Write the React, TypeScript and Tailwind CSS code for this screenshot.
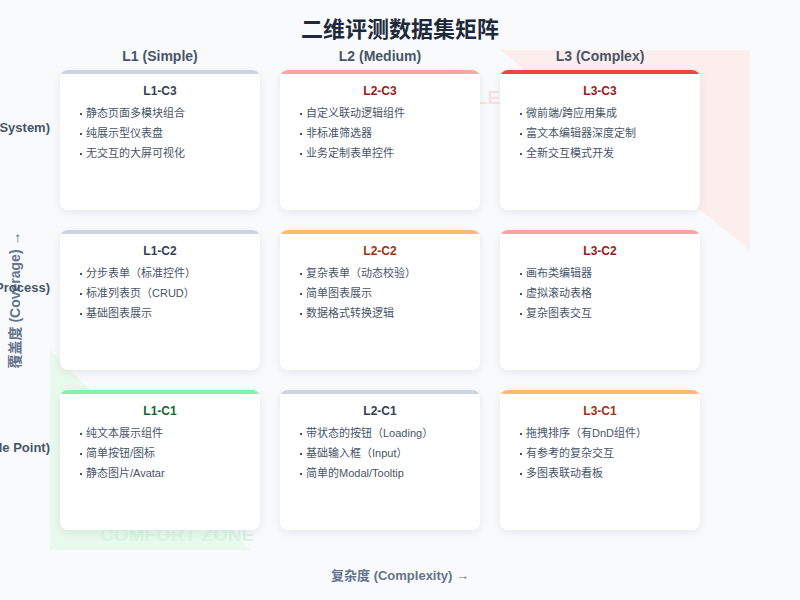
import React from 'react';

type Cell = { id: string; bar: string; title: string; items: string[] };

const rows: { label: string; cells: Cell[] }[] = [
  {
    label: 'C3 (Design System)',
    cells: [
      { id: 'L1-C3', bar: 'bg-[#cbd5e1]', title: 'text-[#334155]', items: ['静态页面多模块组合', '纯展示型仪表盘', '无交互的大屏可视化'] },
      { id: 'L2-C3', bar: 'bg-[#fca5a5]', title: 'text-[#991b1b]', items: ['自定义联动逻辑组件', '非标准筛选器', '业务定制表单控件'] },
      { id: 'L3-C3', bar: 'bg-[#ef4444]', title: 'text-[#991b1b]', items: ['微前端/跨应用集成', '富文本编辑器深度定制', '全新交互模式开发'] },
    ],
  },
  {
    label: 'C2 (Business Process)',
    cells: [
      { id: 'L1-C2', bar: 'bg-[#cbd5e1]', title: 'text-[#334155]', items: ['分步表单（标准控件）', '标准列表页（CRUD）', '基础图表展示'] },
      { id: 'L2-C2', bar: 'bg-[#fdba74]', title: 'text-[#9a3412]', items: ['复杂表单（动态校验）', '简单图表展示', '数据格式转换逻辑'] },
      { id: 'L3-C2', bar: 'bg-[#fca5a5]', title: 'text-[#991b1b]', items: ['画布类编辑器', '虚拟滚动表格', '复杂图表交互'] },
    ],
  },
  {
    label: 'C1 (Single Point)',
    cells: [
      { id: 'L1-C1', bar: 'bg-[#86efac]', title: 'text-[#166534]', items: ['纯文本展示组件', '简单按钮/图标', '静态图片/Avatar'] },
      { id: 'L2-C1', bar: 'bg-[#cbd5e1]', title: 'text-[#334155]', items: ['带状态的按钮（Loading）', '基础输入框（Input）', '简单的Modal/Tooltip'] },
      { id: 'L3-C1', bar: 'bg-[#fdba74]', title: 'text-[#9a3412]', items: ['拖拽排序（有DnD组件）', '有参考的复杂交互', '多图表联动看板'] },
    ],
  },
];

const Card = ({ c }: { c: Cell }) => (
  <div className="relative z-10 w-[200px] h-[140px] bg-white rounded-lg shadow-[0_3px_10px_rgba(15,23,42,0.08)] overflow-hidden">
    <div className={`h-[4px] ${c.bar}`} />
    <div className={`mt-[9px] text-center text-[12px] leading-[16px] font-bold ${c.title}`}>{c.id}</div>
    <ul className="mt-[7px] pl-[20px] flex flex-col gap-[5px]">
      {c.items.map((t) => (
        <li key={t} className="flex items-center gap-[4px] text-[11px] leading-[15px] text-[#475569]">
          <span className="w-[2px] h-[2px] bg-[#475569]" />
          {t}
        </li>
      ))}
    </ul>
  </div>
);

export default function App() {
  return (
    <div className="relative w-[800px] h-[600px] overflow-hidden bg-[#f8fafc] font-[Liberation_Sans,Noto_Sans_CJK_SC,sans-serif]">
      <div className="absolute left-[500px] top-[50px] w-[250px] h-[200px] bg-[#fdeeee] [clip-path:polygon(0_0,100%_0,100%_100%)]" />
      <div className="absolute left-[50px] top-[350px] w-[200px] h-[200px] bg-[#e8faee] [clip-path:polygon(0_0,0_100%,100%_100%)]" />
      <div className="absolute left-[423px] top-[84px] text-[19px] font-bold text-[#fbe0e0] whitespace-nowrap">CHALLENGE ZONE</div>
      <div className="absolute left-[100px] top-[521px] text-[19px] font-bold text-[#d9f5e3] whitespace-nowrap">COMFORT ZONE</div>
      <div className="absolute left-[15px] top-[300px] -translate-x-1/2 -translate-y-1/2 -rotate-90 whitespace-nowrap text-[14px] font-bold text-[#64748b]">
        覆盖度 (Coverage) →
      </div>

      <div className="relative flex flex-col">
        <h1 className="mt-[14px] text-center text-[22px] leading-[32px] font-bold text-[#1e293b]">二维评测数据集矩阵</h1>
        <div className="flex pl-[60px] gap-5 h-[20px] items-center">
          {['L1 (Simple)', 'L2 (Medium)', 'L3 (Complex)'].map((h) => (
            <div key={h} className="w-[200px] text-center text-[14px] font-bold text-[#475569]">{h}</div>
          ))}
        </div>
        <div className="mt-[4px] flex flex-col gap-5">
          {rows.map((r) => (
            <div key={r.label} className="flex items-start">
              <div className="w-[50px] mr-[10px] mt-[49px] flex justify-end">
                <span className="whitespace-nowrap text-[13px] leading-[18px] font-bold text-[#475569]">{r.label}</span>
              </div>
              <div className="flex gap-5">
                {r.cells.map((c) => <Card key={c.id} c={c} />)}
              </div>
            </div>
          ))}
        </div>
        <div className="mt-[36px] text-center text-[13px] font-bold text-[#64748b]">复杂度 (Complexity) →</div>
      </div>
    </div>
  );
}
